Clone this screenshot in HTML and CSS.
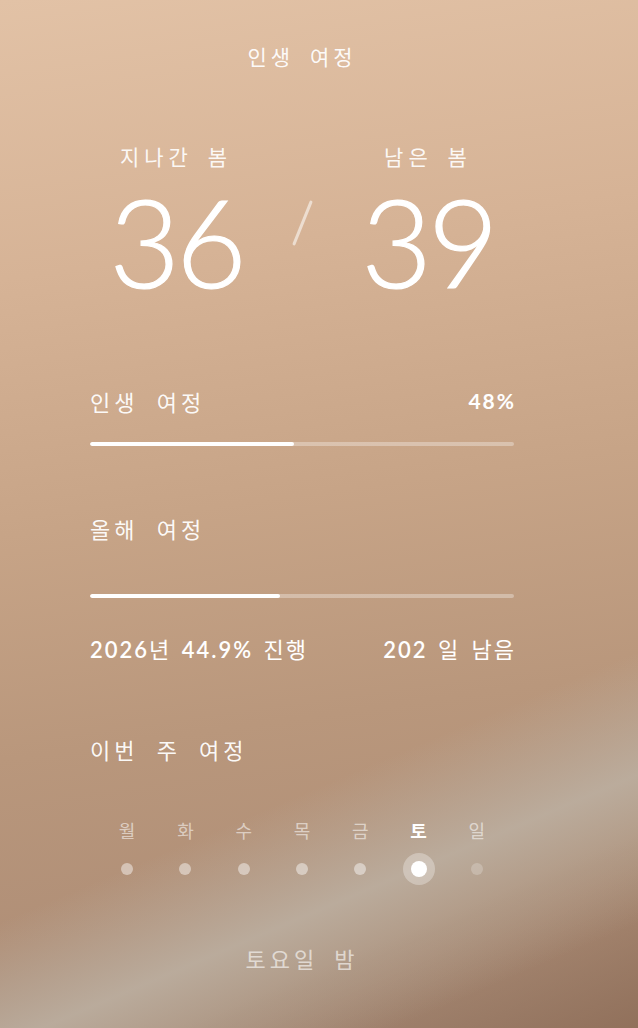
FILE: index.html
```html
<!DOCTYPE html>
<html lang="ko">
<head>
<meta charset="utf-8">
<title>인생 여정</title>
<link rel="stylesheet" href="styles.css">
</head>
<body>
<div class="page">
  <div class="content">
    <h1 class="title">인생 여정</h1>

    <div class="hero">
      <div class="hero-label left">지나간 봄</div>
      <div class="hero-label right">남은 봄</div>
      <div class="hero-num left">36</div>
      <div class="hero-sep"><span class="slash"></span></div>
      <div class="hero-num right">39</div>
    </div>

    <div class="section life">
      <div class="row">
        <span class="label">인생 여정</span>
        <span class="pct">48%</span>
      </div>
      <div class="track"><div class="fill" style="width:48%"></div></div>
    </div>

    <div class="section year">
      <div class="row">
        <span class="label">올해 여정</span>
      </div>
      <div class="track year-track"><div class="fill" style="width:44.9%"></div></div>
      <div class="row stats">
        <span>2026<span class="ko">년</span> 44.9% <span class="ko">진행</span></span>
        <span>202 <span class="ko">일 남음</span></span>
      </div>
    </div>

    <div class="section week">
      <div class="label">이번 주 여정</div>
      <div class="days">
        <div class="day past"><span class="dname">월</span><span class="dot"></span></div>
        <div class="day past"><span class="dname">화</span><span class="dot"></span></div>
        <div class="day past"><span class="dname">수</span><span class="dot"></span></div>
        <div class="day past"><span class="dname">목</span><span class="dot"></span></div>
        <div class="day past"><span class="dname">금</span><span class="dot"></span></div>
        <div class="day today"><span class="dname">토</span><span class="dot"></span></div>
        <div class="day future"><span class="dname">일</span><span class="dot"></span></div>
      </div>
    </div>

    <div class="footer">토요일 밤</div>
  </div>
</div>
</body>
</html>
```

FILE: styles.css
```css
* { box-sizing: border-box; }

html, body {
  margin: 0;
  padding: 0;
}

body {
  width: 638px;
  height: 1028px;
  overflow: hidden;
  font-family: "Noto Sans CJK KR", "Noto Sans", sans-serif;
  color: #fff;
}

.page {
  width: 638px;
  height: 1028px;
  background:
    linear-gradient(157deg, rgba(190,178,164,0) 71%, rgba(188,176,162,0.85) 80.5%, rgba(180,166,150,0.5) 86%, rgba(170,150,134,0) 92%),
    linear-gradient(157deg, rgba(0,0,0,0) 85%, rgba(140,106,84,0.8) 100%),
    linear-gradient(172deg, #e2c2a6 0%, #d6b396 25%, #c7a487 48%, #b9977c 68%, #b08f77 85%, #a58a77 100%);
  overflow: hidden;
}

.content {
  margin-left: 90px;
  width: 424px;
}

.title {
  margin: 0;
  padding-top: 42px;
  font-size: 21px;
  line-height: 28px;
  font-weight: 400;
  letter-spacing: 4px;
  word-spacing: 6px;
  text-align: center;
  color: rgba(255,255,255,0.95);
}

.hero {
  margin-top: 74px;
  display: grid;
  grid-template-columns: 172px 80px 172px;
  grid-template-rows: 24px 146px;
}

.hero-label {
  font-size: 21px;
  line-height: 24px;
  letter-spacing: 5px;
  word-spacing: 4px;
  text-align: center;
  color: rgba(255,255,255,0.92);
  grid-row: 1;
}
.hero-label.left { grid-column: 1; }
.hero-label.right { grid-column: 3; }

.hero-num {
  grid-row: 2;
  font-family: "Lato", sans-serif;
  font-weight: 300;
  -webkit-text-stroke: 1.2px #fff;
  font-size: 122px;
  line-height: 146px;
  letter-spacing: -4px;
  text-align: center;
  color: #fff;
}
.hero-num.left { grid-column: 1; }
.hero-num.right { grid-column: 3; }

.hero-sep {
  grid-row: 2;
  grid-column: 2;
  display: flex;
  justify-content: center;
}

.slash {
  display: block;
  width: 3px;
  height: 48px;
  margin-top: 31px;
  border-radius: 2px;
  background: rgba(255,255,255,0.55);
  transform: rotate(22deg);
}

.row {
  display: flex;
  justify-content: space-between;
  align-items: center;
}

.label {
  font-size: 22px;
  line-height: 28px;
  letter-spacing: 4px;
  word-spacing: 8px;
  color: rgba(255,255,255,0.95);
}

.pct {
  font-family: "Lato", sans-serif;
  font-weight: 700;
  font-size: 21px;
  line-height: 28px;
  letter-spacing: 2px;
  margin-right: -2px;
}

.life { margin-top: 73px; }
.life .track { margin-top: 27px; }

.track {
  height: 4px;
  border-radius: 2px;
  background: rgba(255,255,255,0.32);
  overflow: hidden;
}
.fill {
  height: 100%;
  background: #fff;
  border-radius: 2px;
}

.year { margin-top: 68px; }
.year-track { margin-top: 52px; }

.stats {
  margin-top: 38px;
  height: 28px;
  font-family: "Lato", "Noto Sans CJK KR", sans-serif;
  font-weight: 600;
  font-size: 22px;
  line-height: 28px;
  letter-spacing: 2px;
  word-spacing: 3px;
}
.stats .ko {
  font-family: "Noto Sans CJK KR", sans-serif;
  font-weight: 400;
  line-height: 1;
}
.stats > span:last-child { margin-right: -2px; }

.week { margin-top: 71px; }

.days {
  margin-top: 55px;
  padding: 0 8px;
  display: grid;
  grid-template-columns: repeat(7, 1fr);
}

.day {
  display: flex;
  flex-direction: column;
  align-items: center;
}

.dname {
  font-size: 18px;
  line-height: 24px;
  color: rgba(255,255,255,0.55);
}

.dot {
  margin-top: 11px;
  width: 32px;
  height: 32px;
  border-radius: 50%;
  display: flex;
  align-items: center;
  justify-content: center;
}
.dot::after {
  content: "";
  width: 12px;
  height: 12px;
  border-radius: 50%;
  background: rgba(255,255,255,0.45);
}

.today .dname {
  color: #fff;
  font-weight: 700;
}
.today .dot {
  background: rgba(255,255,255,0.3);
}
.today .dot::after {
  width: 16px;
  height: 16px;
  background: #fff;
}

.future .dot::after {
  background: rgba(255,255,255,0.22);
}

.footer {
  margin-top: 59px;
  font-size: 22px;
  line-height: 28px;
  letter-spacing: 4px;
  word-spacing: 6px;
  text-align: center;
  color: rgba(255,255,255,0.6);
}
```
